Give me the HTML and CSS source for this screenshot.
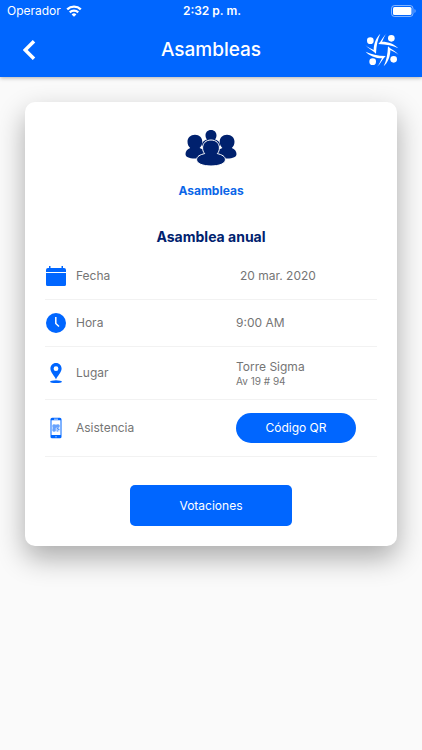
FILE: index.html
```html
<!DOCTYPE html>
<html lang="es">
<head>
<meta charset="utf-8">
<meta name="viewport" content="width=device-width, initial-scale=1">
<title>Asambleas</title>
<link rel="stylesheet" href="styles.css">
</head>
<body>
<header class="header">
  <div class="status">
    <div class="carrier">Operador
      <svg width="16" height="12" viewBox="0 0 16 12" fill="none" stroke="#fff" stroke-width="2.300" aria-hidden="true"><path d="M1.200 4.400a9.800 9.800 0 0 1 13.600 0M3.800 7.400a6 6 0 0 1 8.400 0"/><path d="M8 11.800 5.600 9.400a3.400 3.400 0 0 1 4.800 0z" fill="#fff" stroke="none"/></svg>
    </div>
    <div class="time">2:32 p. m.</div>
    <svg class="battery" width="26" height="12" viewBox="0 0 26 12" aria-hidden="true"><rect x=".5" y=".5" width="21.5" height="11" rx="3" fill="none" stroke="#fff" stroke-opacity=".5"/><rect x="2" y="2" width="18.5" height="8" rx="1.5" fill="#fff"/><path d="M23.5 4v4c1.5-.6 1.5-3.4 0-4z" fill="#fff" fill-opacity=".5"/></svg>
  </div>
  <div class="appbar">
    <button class="back" type="button" aria-label="Volver">
      <svg width="14" height="20" viewBox="0 0 14 20" fill="none" stroke="#fff" stroke-width="3.500"><path d="M11 1.200 2.200 10l8.800 8.800"/></svg>
    </button>
    <h1 class="title">Asambleas</h1>
    <svg class="logo" width="34" height="34" viewBox="-51 -51 102 102" fill="#fff" aria-hidden="true">
      <defs><g id="person"><circle cx="-35" cy="-28" r="10"/><path d="M-50-15C-42-6-32-5-25 0C-25-20-17-38-5-49C-13-32-17-14-18 11C-27 1-41-3-50-15z"/></g></defs>
      <use href="#person"/><use href="#person" transform="rotate(90)"/><use href="#person" transform="rotate(180)"/><use href="#person" transform="rotate(270)"/>
    </svg>
  </div>
</header>
<main class="main">
  <section class="card">
    <svg class="people" width="52" height="36" viewBox="0 0 52 36" fill="#00216e" aria-hidden="true">
      <path d="M26 0c3.600 0 5.500 2.500 5.500 5.300 0 1.800-.6 3.200-1.600 4.200 3 .9 5.300 2.500 5.300 6.500H16.800c0-4 2.300-5.600 5.300-6.500-1-1-1.600-2.400-1.600-4.200C20.500 2.500 22.400 0 26 0z"/>
      <g id="side"><path d="M10 4.800c4.500 0 7.300 3 7.300 7 0 2.700-1.200 4.800-2.700 6.200 3.200 1 5.800 2.800 5.800 6 0 2.700-4 4.500-10.400 4.500S.5 26.800.5 24c0-3 2-4.800 4.700-6-1.500-1.300-2.700-3.500-2.700-6.200C2.500 7.800 5.500 4.800 10 4.800z"/></g>
      <use href="#side" transform="translate(52) scale(-1 1)"/>
      <path d="M26 10c5.300 0 8.400 3.500 8.400 7.900 0 2.400-.8 4.300-2.100 5.700 4.400 1 8.100 2.700 8.100 6.200 0 3.700-6.300 6.200-14.400 6.200s-14.400-2.500-14.400-6.200c0-3.500 3.700-5.200 8.100-6.200-1.300-1.400-2.100-3.300-2.100-5.700C17.600 13.500 20.700 10 26 10z" stroke="#fff"/>
    </svg>
    <p class="section">Asambleas</p>
    <h2 class="name">Asamblea anual</h2>
    <dl class="details">
      <div class="row">
        <svg class="icon" width="22" height="22" viewBox="0 0 22 22" fill="#0066ff" aria-hidden="true"><path d="M4 1h1.500v2h11V1H18v2h1q2 0 2 2v2H1V5q0-2 2-2h1zM1 8h20v11.500q0 1.500-1.500 1.500h-17Q1 21 1 19.500z"/></svg>
        <dt>Fecha</dt><dd class="date">20 mar. 2020</dd>
      </div>
      <div class="row">
        <svg class="icon" width="22" height="22" viewBox="0 0 22 22" aria-hidden="true"><circle cx="11" cy="11" r="10" fill="#0066ff"/><path d="M10.800 5v6.500l3.200 3" fill="none" stroke="#fff" stroke-width="1.500"/></svg>
        <dt>Hora</dt><dd>9:00 AM</dd>
      </div>
      <div class="row place">
        <svg class="icon" width="22" height="22" viewBox="0 0 22 22" fill="#0066ff" aria-hidden="true"><path fill-rule="evenodd" d="M11 1c3.400 0 5.600 2.500 5.600 5.600C16.600 10.400 12.500 14 11 17.500 9.500 14 5.400 10.400 5.400 6.600 5.400 3.500 7.600 1 11 1zm0 3.300a2.400 2.400 0 1 0 0 4.800 2.400 2.400 0 0 0 0-4.800z"/><ellipse cx="11" cy="19.700" rx="6" ry="1.400"/></svg>
        <dt>Lugar</dt><dd>Torre Sigma<small>Av 19 # 94</small></dd>
      </div>
      <div class="row attendance">
        <svg class="icon" width="22" height="22" viewBox="0 0 22 22" aria-hidden="true"><rect x="5.500" y=".800" width="11" height="20.500" rx="1.600" fill="#0066ff"/><path fill="#fff" d="M6.500 3.300h9v14.800h-9zM9 1.800h4v.600H9z"/><circle cx="11" cy="19.700" r=".700" fill="#9cf"/><path fill="#b5d2ff" d="M7.500 7.500h7v7h-7z"/><g fill="none" stroke="#3d88fb" stroke-width=".800"><path d="M8 8h2v2H8zM12 8h2v2h-2zM8 12h2v2H8zM12 11.500h1v1h1.500M12 14h1M7.500 11h3.500V7.500"/></g></svg>
        <dt>Asistencia</dt><dd><button class="qr" type="button">Código QR</button></dd>
      </div>
    </dl>
    <button class="vote" type="button">Votaciones</button>
  </section>
</main>
</body>
</html>
```
FILE: styles.css
```css
* { box-sizing: border-box; }
body {
  margin: 0;
  min-height: 100vh;
  background: #fafafa;
  color: #757575;
  font-family: Inter, "Liberation Sans", sans-serif;
  font-size: 12px;
  line-height: 16px;
}
h1, h2, p, dl, dd { margin: 0; }
button { border: 0; padding: 0; font: inherit; color: #fff; cursor: pointer; }
svg { display: block; }

.header { background: #0066ff; color: #fff; box-shadow: 0 1px 4px rgba(0, 0, 0, .3); }
.status {
  display: grid;
  grid-template-columns: 1fr auto 1fr;
  align-items: center;
  height: 22px;
  padding: 0 5px 0 7px;
}
.carrier { display: flex; align-items: center; gap: 5px; }
.time { font-weight: 600; }
.battery { justify-self: end; }
.appbar {
  display: grid;
  grid-template-columns: 1fr auto 1fr;
  align-items: center;
  height: 55px;
  padding: 0 23px;
}
.back { width: 14px; background: none; }
.title { font-size: 19px; line-height: 24px; font-weight: 500; }
.logo { justify-self: end; }

.main { padding: 25px; }
.card {
  display: flex;
  flex-direction: column;
  align-items: center;
  padding: 28px 20px 20px;
  border-radius: 10px;
  background: #fff;
  box-shadow: 0 12px 28px rgba(0, 0, 0, .32);
}
.section { margin-top: 17px; color: #0b66e8; font-weight: 700; }
.name { margin-top: 30px; color: #00216e; font-size: 14px; font-weight: 700; }
.details { width: 100%; margin-top: 8px; }
.row {
  display: grid;
  grid-template-columns: 22px 169fr 141fr;
  align-items: center;
  min-height: 47px;
  border-bottom: 1px solid #f2f2f2;
}
.row dt { padding-left: 9px; }
.row .date { padding-left: 4px; }
.place { min-height: 53px; }
.attendance { min-height: 57px; }
small { display: block; font-size: 10px; line-height: 12px; }
.qr { width: 120px; height: 30px; border-radius: 15px; background: #0066ff; }
.vote {
  width: 49%;
  height: 41px;
  margin-top: 28px;
  border-radius: 5px;
  background: #0066ff;
}
```
